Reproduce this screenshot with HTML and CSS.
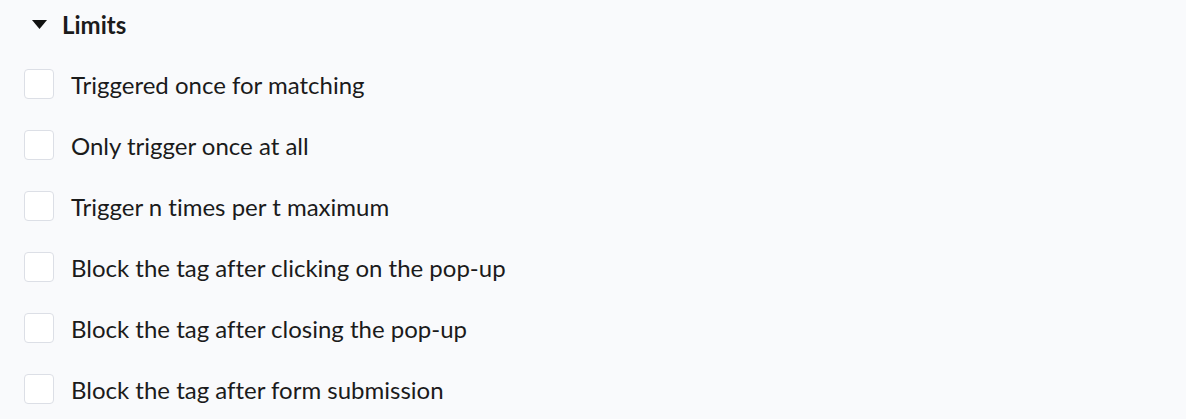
FILE: index.html
```html
<!DOCTYPE html>
<html>
<head>
<meta charset="utf-8">
<link rel="stylesheet" href="styles.css">
</head>
<body>
<section class="limits">
  <div class="header">
    <svg class="caret" width="15" height="9" viewBox="0 0 15 9"><path d="M0 0 H15 L7.5 9 Z" fill="#111"/></svg>
    <span class="title">Limits</span>
  </div>
  <ul class="options">
    <li class="option"><span class="box"></span><span class="label">Triggered once for matching</span></li>
    <li class="option"><span class="box"></span><span class="label">Only trigger once at all</span></li>
    <li class="option"><span class="box"></span><span class="label">Trigger n times per t maximum</span></li>
    <li class="option"><span class="box"></span><span class="label">Block the tag after clicking on the pop-up</span></li>
    <li class="option"><span class="box"></span><span class="label">Block the tag after closing the pop-up</span></li>
    <li class="option"><span class="box"></span><span class="label">Block the tag after form submission</span></li>
  </ul>
</section>
</body>
</html>
```
FILE: styles.css
```css
html, body {
  margin: 0;
  padding: 0;
  background: #f9fafc;
}
body {
  font-family: "Lato", "Source Sans Pro", sans-serif;
  font-variant-ligatures: none;
  color: #1b1b1b;
  width: 1186px;
  height: 419px;
  overflow: hidden;
}
.limits {
  padding: 9px 0 0 24px;
}
.header {
  display: flex;
  align-items: center;
  height: 30px;
  padding-left: 8px;
  gap: 15px;
}
.caret {
  display: block;
  margin-top: 1px;
}
.title {
  font-weight: 700;
  font-size: 24px;
}
.options {
  list-style: none;
  margin: 30px 0 0;
  padding: 0;
  display: flex;
  flex-direction: column;
  gap: 31px;
}
.option {
  display: flex;
  align-items: center;
  height: 30px;
  gap: 17px;
}
.box {
  width: 28px;
  height: 28px;
  border: 1px solid #dcdfe6;
  border-radius: 4px;
  background: #fff;
  flex: none;
}
.label {
  font-size: 24px;
}
```
